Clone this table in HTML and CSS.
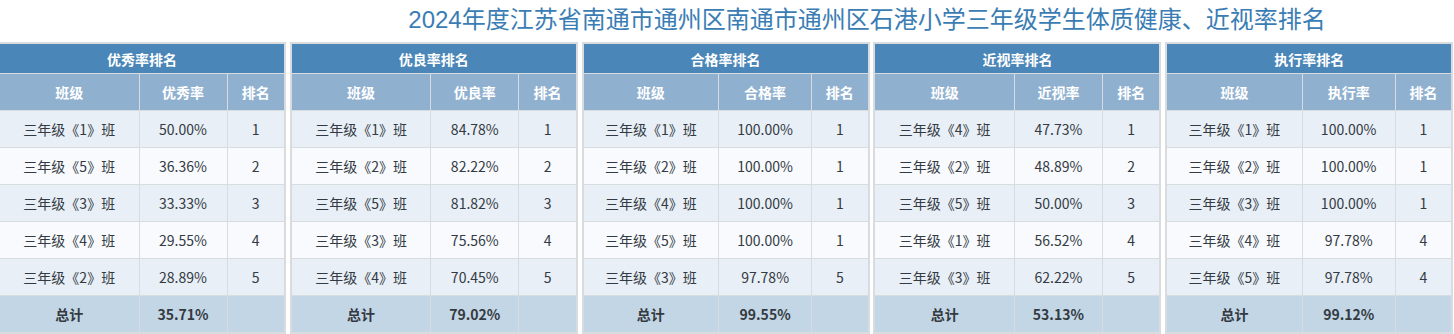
FILE: index.html
```html
<!DOCTYPE html>
<html lang="zh-CN">
<head>
<meta charset="utf-8">
<title>排名</title>
<link rel="stylesheet" href="styles.css">
</head>
<body>
<h1 class="title">2024年度江苏省南通市通州区南通市通州区石港小学三年级学生体质健康、近视率排名</h1>
<div class="boards">
  <table class="rank narrow">
    <colgroup><col class="c1"><col class="c2"><col class="c3"></colgroup>
    <thead>
      <tr class="r-cap"><th colspan="3">优秀率排名</th></tr>
      <tr class="r-head"><th>班级</th><th>优秀率</th><th>排名</th></tr>
    </thead>
    <tbody>
      <tr><td>三年级《1》班</td><td>50.00%</td><td>1</td></tr>
      <tr><td>三年级《5》班</td><td>36.36%</td><td>2</td></tr>
      <tr><td>三年级《3》班</td><td>33.33%</td><td>3</td></tr>
      <tr><td>三年级《4》班</td><td>29.55%</td><td>4</td></tr>
      <tr><td>三年级《2》班</td><td>28.89%</td><td>5</td></tr>
      <tr class="r-total"><td>总计</td><td>35.71%</td><td></td></tr>
    </tbody>
  </table>
  <table class="rank narrow">
    <colgroup><col class="c1"><col class="c2"><col class="c3"></colgroup>
    <thead>
      <tr class="r-cap"><th colspan="3">优良率排名</th></tr>
      <tr class="r-head"><th>班级</th><th>优良率</th><th>排名</th></tr>
    </thead>
    <tbody>
      <tr><td>三年级《1》班</td><td>84.78%</td><td>1</td></tr>
      <tr><td>三年级《2》班</td><td>82.22%</td><td>2</td></tr>
      <tr><td>三年级《5》班</td><td>81.82%</td><td>3</td></tr>
      <tr><td>三年级《3》班</td><td>75.56%</td><td>4</td></tr>
      <tr><td>三年级《4》班</td><td>70.45%</td><td>5</td></tr>
      <tr class="r-total"><td>总计</td><td>79.02%</td><td></td></tr>
    </tbody>
  </table>
  <table class="rank wide">
    <colgroup><col class="c1"><col class="c2"><col class="c3"></colgroup>
    <thead>
      <tr class="r-cap"><th colspan="3">合格率排名</th></tr>
      <tr class="r-head"><th>班级</th><th>合格率</th><th>排名</th></tr>
    </thead>
    <tbody>
      <tr><td>三年级《1》班</td><td>100.00%</td><td>1</td></tr>
      <tr><td>三年级《2》班</td><td>100.00%</td><td>1</td></tr>
      <tr><td>三年级《4》班</td><td>100.00%</td><td>1</td></tr>
      <tr><td>三年级《5》班</td><td>100.00%</td><td>1</td></tr>
      <tr><td>三年级《3》班</td><td>97.78%</td><td>5</td></tr>
      <tr class="r-total"><td>总计</td><td>99.55%</td><td></td></tr>
    </tbody>
  </table>
  <table class="rank narrow">
    <colgroup><col class="c1"><col class="c2"><col class="c3"></colgroup>
    <thead>
      <tr class="r-cap"><th colspan="3">近视率排名</th></tr>
      <tr class="r-head"><th>班级</th><th>近视率</th><th>排名</th></tr>
    </thead>
    <tbody>
      <tr><td>三年级《4》班</td><td>47.73%</td><td>1</td></tr>
      <tr><td>三年级《2》班</td><td>48.89%</td><td>2</td></tr>
      <tr><td>三年级《5》班</td><td>50.00%</td><td>3</td></tr>
      <tr><td>三年级《1》班</td><td>56.52%</td><td>4</td></tr>
      <tr><td>三年级《3》班</td><td>62.22%</td><td>5</td></tr>
      <tr class="r-total"><td>总计</td><td>53.13%</td><td></td></tr>
    </tbody>
  </table>
  <table class="rank wide">
    <colgroup><col class="c1"><col class="c2"><col class="c3"></colgroup>
    <thead>
      <tr class="r-cap"><th colspan="3">执行率排名</th></tr>
      <tr class="r-head"><th>班级</th><th>执行率</th><th>排名</th></tr>
    </thead>
    <tbody>
      <tr><td>三年级《1》班</td><td>100.00%</td><td>1</td></tr>
      <tr><td>三年级《2》班</td><td>100.00%</td><td>1</td></tr>
      <tr><td>三年级《3》班</td><td>100.00%</td><td>1</td></tr>
      <tr><td>三年级《4》班</td><td>97.78%</td><td>4</td></tr>
      <tr><td>三年级《5》班</td><td>97.78%</td><td>4</td></tr>
      <tr class="r-total"><td>总计</td><td>99.12%</td><td></td></tr>
    </tbody>
  </table>
</div>
</body>
</html>
```
FILE: styles.css
```css
html, body {
  margin: 0;
  padding: 0;
  background: #ffffff;
}
body {
  font-family: "Noto Sans CJK SC", "Noto Sans", sans-serif;
  color: #333a42;
  overflow: hidden;
}
.title {
  margin: 0 0 2px 0;
  padding-left: 280px;
  height: 40px;
  line-height: 40px;
  text-align: center;
  font-family: "Liberation Sans", "Noto Sans CJK SC", sans-serif;
  font-weight: normal;
  font-size: 24px;
  color: #3a7db4;
  white-space: nowrap;
}
.boards {
  display: grid;
  grid-template-columns: repeat(5, 286px);
  column-gap: 5.8px;
  margin-left: -2px;
  align-items: start;
}
.rank {
  width: 286px;
  table-layout: fixed;
  border-collapse: collapse;
  border: 2px solid #d9dcdf;
  font-size: 14px;
}
.rank th, .rank td {
  border: 1px solid #d9dcdf;
  text-align: center;
  padding: 0;
  white-space: nowrap;
}
.narrow .c1 { width: 140px; }
.narrow .c2 { width: 88px; }
.narrow .c3 { width: 58px; }
.wide .c1 { width: 136px; }
.wide .c2 { width: 93px; }
.wide .c3 { width: 57px; }
.r-cap th {
  height: 29px;
  background: #4a86b8;
  color: #ffffff;
  font-weight: bold;
}
.r-head th {
  height: 36px;
  background: #8fb0cf;
  color: #ffffff;
  font-weight: bold;
}
.rank tbody td {
  height: 36px;
  background: #e8eff7;
}
.rank tbody tr:nth-child(even) td {
  background: #f8fafe;
}
.rank tbody tr.r-total td {
  background: #c3d6e5;
  font-weight: bold;
  color: #333a42;
}
```
